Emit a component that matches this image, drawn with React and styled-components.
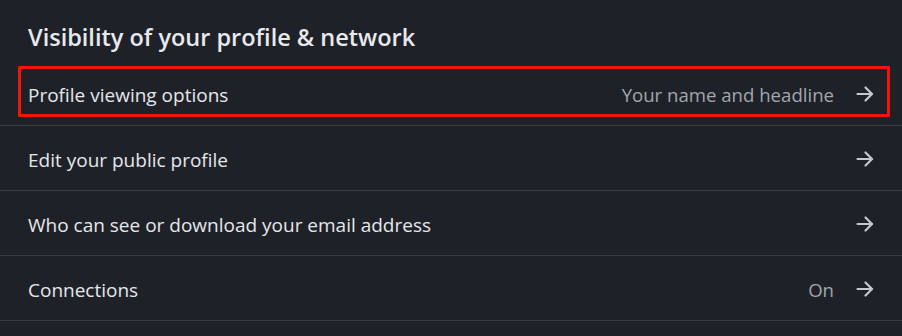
import React from 'react';
import styled, { createGlobalStyle } from 'styled-components';

const GlobalStyle = createGlobalStyle`
    html, body {
        margin: 0;
        padding: 0;
        background: #1f2128;
    }
    body {
        font-family: 'Open Sans', 'Liberation Sans', sans-serif;
        -webkit-font-smoothing: antialiased;
    }
`;

const Panel = styled.section`
    width: 902px;
    height: 336px;
    overflow: hidden;
    background: #1f2128;
    color: #e6e7ea;
`;

const Title = styled.h2`
    margin: 0;
    padding: 21px 28px 8px;
    font-size: 23.5px;
    line-height: 32px;
    font-weight: 600;
    color: #e8e9ec;
`;

const List = styled.ul`
    list-style: none;
    margin: 0;
    padding: 0;
`;

const Row = styled.li`
    position: relative;
    display: flex;
    align-items: center;
    box-sizing: border-box;
    height: 65px;
    padding: 3px 28px 0;
    border-bottom: 1px solid #3a3c43;

    /* red annotation box */
    ${({ $highlight }) =>
        $highlight &&
        `
        &::after {
            content: '';
            position: absolute;
            left: 18px;
            right: 12px;
            top: 5px;
            bottom: 8px;
            border: 3px solid #f3140c;
            border-radius: 1px;
            pointer-events: none;
        }
    `}
`;

const Label = styled.span`
    flex: 1;
    font-size: 19px;
    color: #e6e7ea;
`;

const Value = styled.span`
    font-size: 18.6px;
    color: #a3a6ad;
    margin-right: 22px;
`;

const Arrow = styled.svg`
    width: 18px;
    height: 18px;
    flex-shrink: 0;
    margin-top: -2px;
`;

const ArrowIcon = () => (
    <Arrow viewBox="0 0 18 18" fill="none" stroke="#c6c8ce" strokeWidth="2.2" strokeLinecap="round" strokeLinejoin="round">
        <path d="M1.5 9h14.5" />
        <path d="M9.5 2.5 16 9l-6.5 6.5" />
    </Arrow>
);

const rows = [
    { label: 'Profile viewing options', value: 'Your name and headline', highlight: true },
    { label: 'Edit your public profile' },
    { label: 'Who can see or download your email address' },
    { label: 'Connections', value: 'On' },
    { label: '' },
];

const App = () => (
    <>
        <GlobalStyle />
        <Panel>
            <Title>Visibility of your profile &amp; network</Title>
            <List>
                {rows.map((row, i) => (
                    <Row key={i} $highlight={row.highlight}>
                        <Label>{row.label}</Label>
                        {row.value && <Value>{row.value}</Value>}
                        {row.label && <ArrowIcon />}
                    </Row>
                ))}
            </List>
        </Panel>
    </>
);

export default App;
